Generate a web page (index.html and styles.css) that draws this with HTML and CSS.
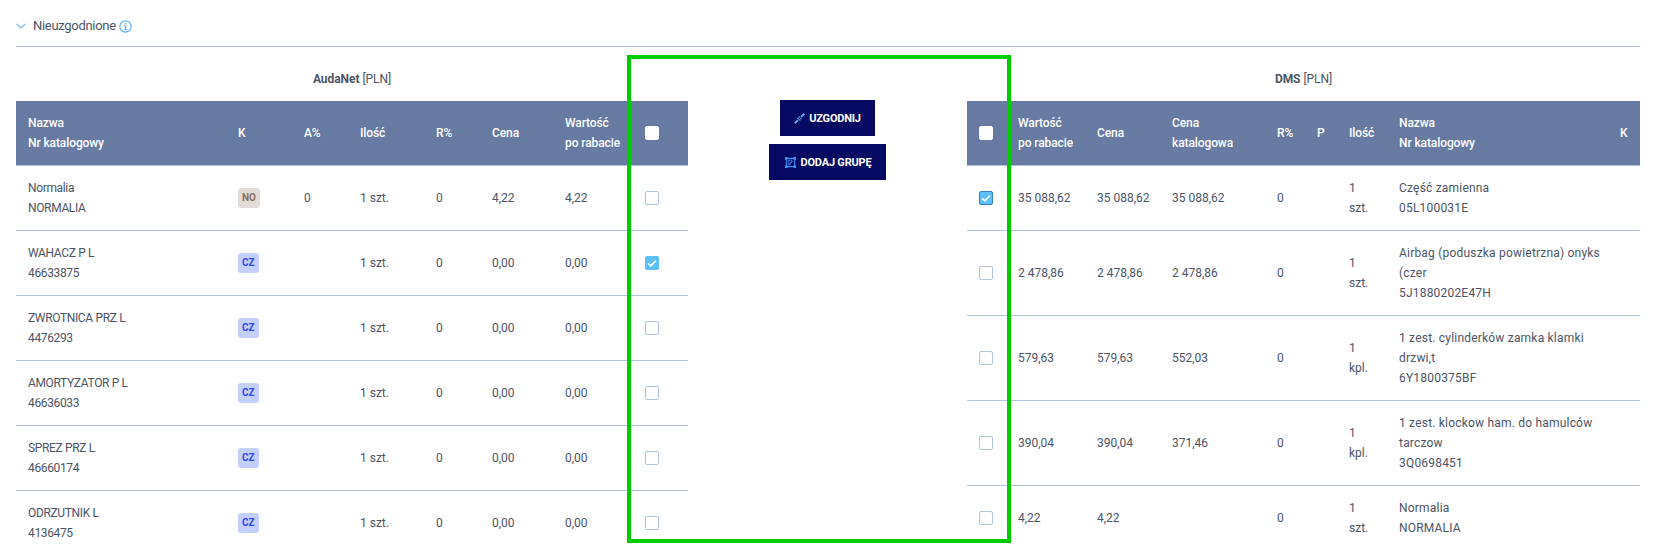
FILE: index.html
```html
<!DOCTYPE html>
<html lang="pl">
<head>
    <meta charset="UTF-8">
    <meta name="viewport" content="width=device-width, initial-scale=1.0">
    <title>Nieuzgodnione</title>
    <link rel="stylesheet" href="styles.css">
</head>
<body>
    <div class="page">
        <div class="section-head">
            <svg class="chevron" width="10" height="6" viewBox="0 0 10 6"><path d="M0.5 0.8 L5 5 L9.5 0.8" fill="none" stroke="#6ab7f5" stroke-width="1.1"/></svg>
            <span class="section-title">Nieuzgodnione</span>
            <svg class="info" width="13" height="13" viewBox="0 0 13 13"><circle cx="6.5" cy="6.5" r="5.6" fill="none" stroke="#5fb2f3" stroke-width="1.2"/><rect x="5.8" y="2.9" width="1.5" height="1.5" fill="#5fb2f3"/><path d="M5 5.5 H7.2 V9.1 H8.1 V10 H5 V9.1 H5.9 V6.4 H5 Z" fill="#5fb2f3"/></svg>
        </div>

        <div class="columns">
            <div class="side">
                <div class="side-title"><b>AudaNet</b> [PLN]</div>
                <table class="grid grid-left">
                    <colgroup>
                        <col class="l-name"><col class="l-k"><col class="l-a"><col class="l-qty"><col class="l-r"><col class="l-price"><col class="l-value"><col class="l-check">
                    </colgroup>
                    <thead>
                        <tr>
                            <th>Nazwa<br>Nr katalogowy</th>
                            <th>K</th>
                            <th>A%</th>
                            <th>Ilość</th>
                            <th>R%</th>
                            <th>Cena</th>
                            <th>Wartość<br>po rabacie</th>
                            <th><span class="box box-head"></span></th>
                        </tr>
                    </thead>
                    <tbody>
                        <tr>
                            <td class="caps">Normalia<br>NORMALIA</td>
                            <td><span class="badge badge-no">NO</span></td>
                            <td>0</td><td>1 szt.</td><td>0</td><td>4,22</td><td>4,22</td>
                            <td><span class="box"></span></td>
                        </tr>
                        <tr>
                            <td class="caps">WAHACZ P L<br>46633875</td>
                            <td><span class="badge badge-cz">CZ</span></td>
                            <td></td><td>1 szt.</td><td>0</td><td>0,00</td><td>0,00</td>
                            <td><span class="box box-on"><svg width="14" height="14" viewBox="0 0 14 14"><path d="M3 7.4 L5.8 9.8 L11 4.6" fill="none" stroke="#fff" stroke-width="1.7"/></svg></span></td>
                        </tr>
                        <tr>
                            <td class="caps">ZWROTNICA PRZ L<br>4476293</td>
                            <td><span class="badge badge-cz">CZ</span></td>
                            <td></td><td>1 szt.</td><td>0</td><td>0,00</td><td>0,00</td>
                            <td><span class="box"></span></td>
                        </tr>
                        <tr>
                            <td class="caps">AMORTYZATOR P L<br>46636033</td>
                            <td><span class="badge badge-cz">CZ</span></td>
                            <td></td><td>1 szt.</td><td>0</td><td>0,00</td><td>0,00</td>
                            <td><span class="box"></span></td>
                        </tr>
                        <tr>
                            <td class="caps">SPREZ PRZ L<br>46660174</td>
                            <td><span class="badge badge-cz">CZ</span></td>
                            <td></td><td>1 szt.</td><td>0</td><td>0,00</td><td>0,00</td>
                            <td><span class="box"></span></td>
                        </tr>
                        <tr>
                            <td class="caps">ODRZUTNIK L<br>4136475</td>
                            <td><span class="badge badge-cz">CZ</span></td>
                            <td></td><td>1 szt.</td><td>0</td><td>0,00</td><td>0,00</td>
                            <td><span class="box"></span></td>
                        </tr>
                    </tbody>
                </table>
            </div>

            <div class="actions">
                <button class="action-btn action-match">
                    <svg width="11" height="11" viewBox="0 0 14 14"><path d="M1 13 L5 9 M9 5 L13 1" stroke="#4fb0f5" stroke-width="2.4" fill="none"/><path d="M3.4 6 L8 10.6 L8 6 Z M6 3.4 L10.6 8 L6 8 Z" fill="#4fb0f5"/></svg>
                    UZGODNIJ
                </button>
                <button class="action-btn">
                    <svg width="13" height="13" viewBox="0 0 14 14"><path d="M2.5 2.5 H11.5 V11.5 H2.5 Z" fill="none" stroke="#3f8cf0" stroke-width="1.2"/><path d="M4.5 4.5 H8.5 V7 H6.5 V9.5 H4.5 Z" fill="none" stroke="#3f8cf0" stroke-width="1"/><path d="M1 1 H4 V4 H1 Z M10 1 H13 V4 H10 Z M1 10 H4 V13 H1 Z M10 10 H13 V13 H10 Z" fill="#3f8cf0"/></svg>
                    DODAJ GRUPĘ
                </button>
            </div>

            <div class="side">
                <div class="side-title"><b>DMS</b> [PLN]</div>
                <table class="grid grid-right">
                    <colgroup>
                        <col class="r-check"><col class="r-value"><col class="r-price"><col class="r-list"><col class="r-r"><col class="r-p"><col class="r-qty"><col class="r-name"><col class="r-k">
                    </colgroup>
                    <thead>
                        <tr>
                            <th><span class="box box-head"></span></th>
                            <th>Wartość<br>po rabacie</th>
                            <th>Cena</th>
                            <th>Cena<br>katalogowa</th>
                            <th>R%</th>
                            <th>P</th>
                            <th class="wrap">Ilość</th>
                            <th>Nazwa<br>Nr katalogowy</th>
                            <th>K</th>
                        </tr>
                    </thead>
                    <tbody>
                        <tr>
                            <td><span class="box box-on box-focus"><svg width="14" height="14" viewBox="0 0 14 14"><path d="M3 7.4 L5.8 9.8 L11 4.6" fill="none" stroke="#fff" stroke-width="1.7"/></svg></span></td>
                            <td>35 088,62</td><td>35 088,62</td><td>35 088,62</td><td>0</td><td></td><td class="wrap">1 szt.</td>
                            <td class="lower">Część zamienna<br>05L100031E</td><td></td>
                        </tr>
                        <tr>
                            <td><span class="box"></span></td>
                            <td>2 478,86</td><td>2 478,86</td><td>2 478,86</td><td>0</td><td></td><td class="wrap">1 szt.</td>
                            <td class="lower">Airbag (poduszka powietrzna) onyks (czer<br>5J1880202E47H</td><td></td>
                        </tr>
                        <tr>
                            <td><span class="box"></span></td>
                            <td>579,63</td><td>579,63</td><td>552,03</td><td>0</td><td></td><td class="wrap">1 kpl.</td>
                            <td class="lower">1 zest. cylinderków zamka klamki drzwi,t<br>6Y1800375BF</td><td></td>
                        </tr>
                        <tr>
                            <td><span class="box"></span></td>
                            <td>390,04</td><td>390,04</td><td>371,46</td><td>0</td><td></td><td class="wrap">1 kpl.</td>
                            <td class="lower">1 zest. klockow ham. do hamulców tarczow<br>3Q0698451</td><td></td>
                        </tr>
                        <tr class="last-row">
                            <td><span class="box"></span></td>
                            <td>4,22</td><td>4,22</td><td></td><td>0</td><td></td><td class="wrap">1 szt.</td>
                            <td class="lower">Normalia<br>NORMALIA</td><td></td>
                        </tr>
                    </tbody>
                </table>
            </div>
        </div>

        <div class="highlight"></div>
    </div>
</body>
</html>
```

FILE: styles.css
```css
html, body {
    margin: 0;
    height: 552px;
    overflow: hidden;
    background-color: #fff;
}
body {
    font-family: Roboto, "Liberation Sans", sans-serif;
    font-size: 12px;
    line-height: 20px;
    color: #4c5566;
}
.page {
    position: relative;
    height: 552px;
    padding: 0 16px;
    box-sizing: border-box;
    overflow: hidden;
}
.section-head {
    display: flex;
    align-items: center;
    height: 40px;
    padding-top: 6px;
    border-bottom: 1px solid #b0c4de;
}
.chevron {
    margin-right: 7px;
}
.section-title {
    font-size: 13px;
    letter-spacing: -0.3px;
    margin-right: 3px;
}
.columns {
    display: grid;
    grid-template-columns: 672px 279px 673px;
}
.side-title {
    height: 54px;
    padding-top: 22px;
    box-sizing: border-box;
    text-align: center;
    font-size: 12px;
    letter-spacing: -0.05px;
}
.grid {
    width: 100%;
    table-layout: fixed;
    border-collapse: separate;
    border-spacing: 0;
}
.grid th {
    padding: 12px 4px 12px 12px;
    background-color: #667aa2;
    color: #fff;
    font-weight: 500;
    letter-spacing: -0.1px;
    text-align: left;
    border-bottom: 1px solid #b0c4de;
}
.grid td {
    padding: 12px 4px 12px 12px;
    border-bottom: 1px solid #b0c4de;
}
.grid .wrap {
    padding-right: 12px;
}
.grid .lower {
    padding-right: 0;
    letter-spacing: 0.2px;
}
.grid .last-row td {
    border-bottom: none;
}
.caps {
    letter-spacing: -0.35px;
}
.l-name { width: 210px; }
.l-k { width: 66px; }
.l-a { width: 56px; }
.l-qty { width: 76px; }
.l-r { width: 56px; }
.l-price { width: 73px; }
.l-value { width: 80px; }
.l-check { width: 55px; }
.r-check { width: 39px; }
.r-value { width: 79px; }
.r-price { width: 75px; }
.r-list { width: 105px; }
.r-r { width: 40px; }
.r-p { width: 32px; }
.r-qty { width: 50px; }
.r-name { width: 221px; }
.r-k { width: 32px; }
.badge {
    display: inline-block;
    height: 20px;
    padding: 0 4px;
    border-radius: 3px;
    font-size: 10px;
    font-weight: 700;
    line-height: 20px;
    vertical-align: middle;
}
.badge-no {
    background-color: #e2dcd8;
    color: #8a6f64;
}
.badge-cz {
    background-color: #c3d0ff;
    color: #3346f0;
}
.box {
    display: block;
    width: 14px;
    height: 14px;
    box-sizing: border-box;
    border: 1px solid #b0c4de;
    border-radius: 2px;
    background-color: #fff;
}
.box svg {
    display: block;
    margin: -1px;
}
.box-head {
    border-color: #fff;
}
.box-on {
    background-color: #5cc0fb;
    border-color: #5cc0fb;
}
.box-focus {
    border-color: #3a80c0;
}
.actions {
    display: flex;
    flex-direction: column;
    align-items: center;
    gap: 8px;
    padding-top: 53px;
}
.action-btn {
    display: flex;
    align-items: center;
    gap: 4px;
    height: 36px;
    padding: 0 15px;
    border: none;
    background-color: #060a62;
    color: #fff;
    font-family: inherit;
    font-size: 11px;
    font-weight: 700;
    letter-spacing: -0.2px;
    cursor: pointer;
}
.action-match {
    padding: 0 14px;
}
/* green frame lies over the middle of both tables */
.highlight {
    position: absolute;
    left: 627px;
    top: 55px;
    width: 384px;
    height: 488px;
    box-sizing: border-box;
    border: 4px solid #00cc00;
}
```
